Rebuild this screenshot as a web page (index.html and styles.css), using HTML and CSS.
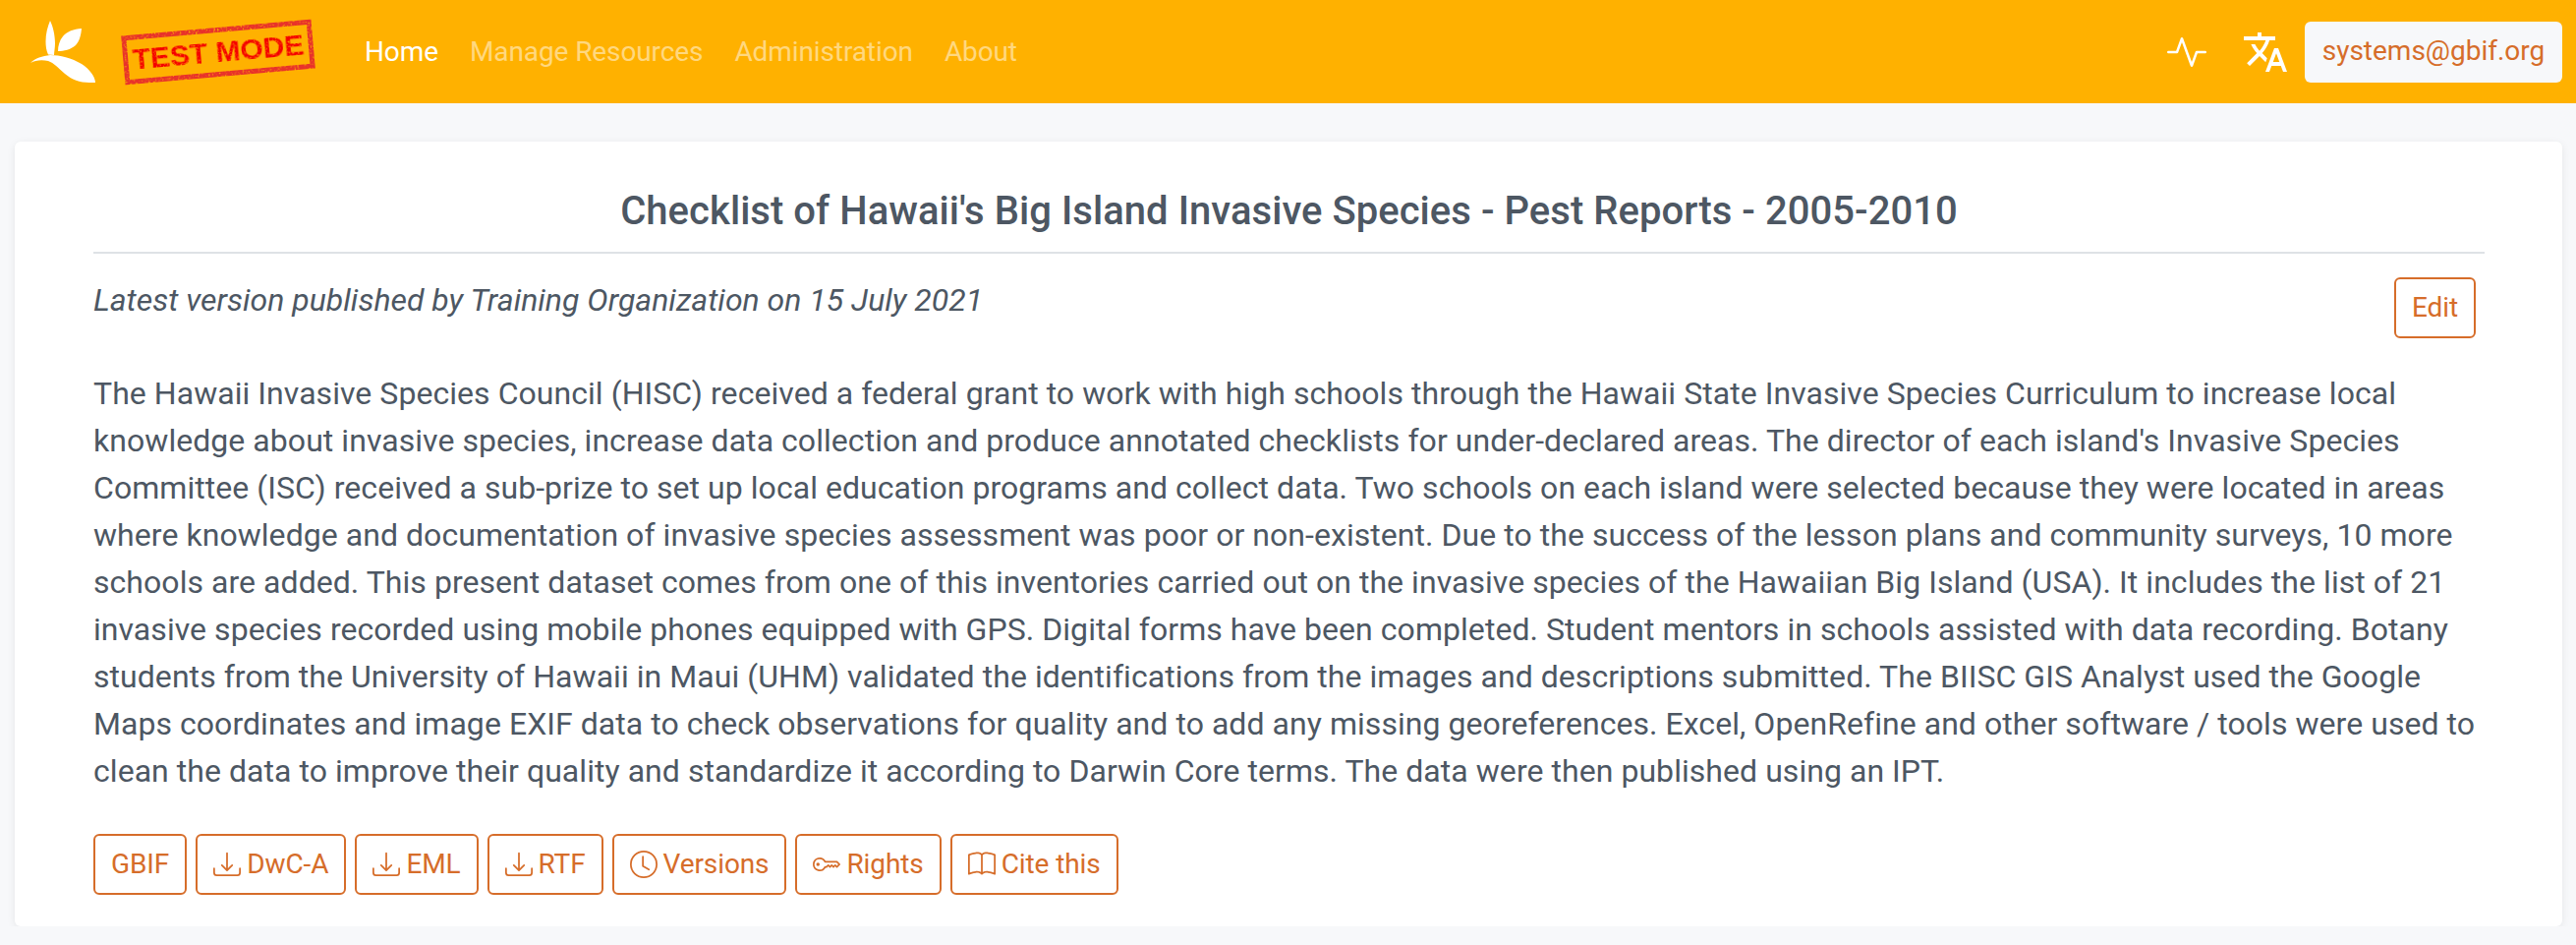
FILE: index.html
```html
<!DOCTYPE html>
<html lang="en">
<head>
  <meta charset="UTF-8">
  <title>Checklist of Hawaii's Big Island Invasive Species</title>
  <link rel="stylesheet" href="styles.css">
</head>
<body>
  <svg class="defs" width="0" height="0">
    <filter id="worn" x="-5%" y="-10%" width="110%" height="120%">
      <feTurbulence type="fractalNoise" baseFrequency="0.55" numOctaves="2" seed="4" result="noise"/>
      <feColorMatrix in="noise" type="matrix" values="0 0 0 0 0  0 0 0 0 0  0 0 0 0 0  0 0 0 -4 3.2" result="holes"/>
      <feComposite in="SourceGraphic" in2="holes" operator="in"/>
    </filter>
  </svg>

  <nav class="navbar">
    <svg class="logo" viewBox="0 0 66 64" fill="#fff">
      <path d="M20 0C23 6 25 15 25 23C25 28 24 32 24 35L18 34.5C16 30 15.5 26 15.5 21C15.5 13 17.5 6 20 0z"/>
      <path d="M52 8C44 8.5 37 11 33 16C29.5 20 28 26 28 31C34 31 41 29.5 46 25C50 21 51.5 14 52 8z"/>
      <path d="M0 43C5 38 12 36 20 35C30 35 42 38 52 44C60 49 66 57 66 63L60 63C50 63 42 60 35 54C28 48 24 43 18 41C12 39.5 5 40 0 43z"/>
    </svg>
    <div class="stamp"><span>TEST MODE</span></div>
    <ul class="menu">
      <li class="active">Home</li>
      <li>Manage Resources</li>
      <li>Administration</li>
      <li>About</li>
    </ul>
    <div class="nav-right">
      <svg class="nav-icon pulse" viewBox="0 0 16 16" fill="#fff"><path fill-rule="evenodd" d="M6 2a.5.5 0 0 1 .47.33L10 12.036l1.53-4.208A.5.5 0 0 1 12 7.5h3.5a.5.5 0 0 1 0 1h-3.15l-1.88 5.17a.5.5 0 0 1-.94 0L6 3.964 4.47 8.171A.5.5 0 0 1 4 8.5H.5a.5.5 0 0 1 0-1h3.15l1.88-5.17A.5.5 0 0 1 6 2Z"/></svg>
      <svg class="nav-icon lang" viewBox="0 0 24 24" fill="#fff"><path d="M12.87 15.07l-2.54-2.51.03-.03c1.74-1.94 2.98-4.17 3.71-6.53H17V4h-7V2H8v2H1v1.99h11.17C11.5 7.92 10.44 9.75 9 11.35 8.07 10.32 7.3 9.19 6.69 8h-2c.73 1.63 1.73 3.17 2.98 4.56l-5.09 5.02L4 19l5-5 3.11 3.11.76-2.04zM18.5 10h-2L12 22h2l1.12-3h4.75L21 22h2l-4.5-12zm-2.62 7l1.62-4.33L19.12 17h-3.24z"/></svg>
      <div class="user">systems@gbif.org</div>
    </div>
  </nav>

  <main class="card">
    <h1>Checklist of Hawaii's Big Island Invasive Species - Pest Reports - 2005-2010</h1>
    <div class="meta">
      <em>Latest version published by Training Organization on 15 July 2021</em>
      <a class="btn">Edit</a>
    </div>
    <p class="desc">The Hawaii Invasive Species Council (HISC) received a federal grant to work with high schools through the Hawaii State Invasive Species Curriculum to increase local knowledge about invasive species, increase data collection and produce annotated checklists for under-declared areas. The director of each island's Invasive Species Committee (ISC) received a sub-prize to set up local education programs and collect data. Two schools on each island were selected because they were located in areas where knowledge and documentation of invasive species assessment was poor or non-existent. Due to the success of the lesson plans and community surveys, 10 more schools are added. This present dataset comes from one of this inventories carried out on the invasive species of the Hawaiian Big Island (USA). It includes the list of 21 invasive species recorded using mobile phones equipped with GPS. Digital forms have been completed. Student mentors in schools assisted with data recording. Botany students from the University of Hawaii in Maui (UHM) validated the identifications from the images and descriptions submitted. The BIISC GIS Analyst used the Google Maps coordinates and image EXIF data to check observations for quality and to add any missing georeferences. Excel, OpenRefine and other software / tools were used to clean the data to improve their quality and standardize it according to Darwin Core terms. The data were then published using an IPT.</p>
    <div class="actions">
      <a class="btn">GBIF</a>
      <a class="btn"><svg viewBox="0 0 16 16" fill="currentColor"><path d="M.5 9.9a.5.5 0 0 1 .5.5v2.5a1 1 0 0 0 1 1h12a1 1 0 0 0 1-1v-2.5a.5.5 0 0 1 1 0v2.5a2 2 0 0 1-2 2H2a2 2 0 0 1-2-2v-2.5a.5.5 0 0 1 .5-.5z"/><path d="M7.646 11.854a.5.5 0 0 0 .708 0l3-3a.5.5 0 0 0-.708-.708L8.5 10.293V1.5a.5.5 0 0 0-1 0v8.793L5.354 8.146a.5.5 0 1 0-.708.708l3 3z"/></svg> DwC-A</a>
      <a class="btn"><svg viewBox="0 0 16 16" fill="currentColor"><path d="M.5 9.9a.5.5 0 0 1 .5.5v2.5a1 1 0 0 0 1 1h12a1 1 0 0 0 1-1v-2.5a.5.5 0 0 1 1 0v2.5a2 2 0 0 1-2 2H2a2 2 0 0 1-2-2v-2.5a.5.5 0 0 1 .5-.5z"/><path d="M7.646 11.854a.5.5 0 0 0 .708 0l3-3a.5.5 0 0 0-.708-.708L8.5 10.293V1.5a.5.5 0 0 0-1 0v8.793L5.354 8.146a.5.5 0 1 0-.708.708l3 3z"/></svg> EML</a>
      <a class="btn"><svg viewBox="0 0 16 16" fill="currentColor"><path d="M.5 9.9a.5.5 0 0 1 .5.5v2.5a1 1 0 0 0 1 1h12a1 1 0 0 0 1-1v-2.5a.5.5 0 0 1 1 0v2.5a2 2 0 0 1-2 2H2a2 2 0 0 1-2-2v-2.5a.5.5 0 0 1 .5-.5z"/><path d="M7.646 11.854a.5.5 0 0 0 .708 0l3-3a.5.5 0 0 0-.708-.708L8.5 10.293V1.5a.5.5 0 0 0-1 0v8.793L5.354 8.146a.5.5 0 1 0-.708.708l3 3z"/></svg> RTF</a>
      <a class="btn"><svg viewBox="0 0 16 16" fill="currentColor"><path d="M8 3.5a.5.5 0 0 0-1 0V9a.5.5 0 0 0 .252.434l3.5 2a.5.5 0 0 0 .496-.868L8 8.71V3.5z"/><path d="M8 16A8 8 0 1 0 8 0a8 8 0 0 0 0 16zm7-8A7 7 0 1 1 1 8a7 7 0 0 1 14 0z"/></svg> Versions</a>
      <a class="btn"><svg viewBox="0 0 16 16" fill="currentColor"><path d="M0 8a4 4 0 0 1 7.465-2H14a.5.5 0 0 1 .354.146l1.5 1.5a.5.5 0 0 1 0 .708l-1.5 1.5a.5.5 0 0 1-.708 0L13 9.207l-.646.647a.5.5 0 0 1-.708 0L11 9.207l-.646.647a.5.5 0 0 1-.708 0L9 9.207l-.646.647A.5.5 0 0 1 8 10h-.535A4 4 0 0 1 0 8zm4-3a3 3 0 1 0 2.712 4.285A.5.5 0 0 1 7.163 9h.63l.853-.854a.5.5 0 0 1 .708 0l.646.647.646-.647a.5.5 0 0 1 .708 0l.646.647.646-.647a.5.5 0 0 1 .708 0l.646.647.793-.793-1-1h-6.63a.5.5 0 0 1-.451-.285A3 3 0 0 0 4 5z"/><path d="M4 8a1 1 0 1 1-2 0 1 1 0 0 1 2 0z"/></svg> Rights</a>
      <a class="btn"><svg viewBox="0 0 16 16" fill="currentColor"><path d="M1 2.828c.885-.37 2.154-.769 3.388-.893 1.33-.134 2.458.063 3.112.752v9.746c-.935-.53-2.12-.603-3.213-.493-1.18.12-2.37.461-3.287.811V2.828zm7.5-.141c.654-.689 1.782-.886 3.112-.752 1.234.124 2.503.523 3.388.893v9.923c-.918-.35-2.107-.692-3.287-.81-1.094-.111-2.278-.039-3.213.492V2.687zM8 1.783C7.015.936 5.587.81 4.287.94c-1.514.153-3.042.672-3.994 1.105A.5.5 0 0 0 0 2.5v11a.5.5 0 0 0 .707.455c.882-.4 2.303-.881 3.68-1.02 1.409-.142 2.59.087 3.223.877a.5.5 0 0 0 .78 0c.633-.79 1.814-1.019 3.222-.877 1.378.139 2.8.62 3.681 1.02A.5.5 0 0 0 16 13.5v-11a.5.5 0 0 0-.293-.455c-.952-.433-2.48-.952-3.994-1.105C10.413.809 8.985.936 8 1.783z"/></svg> Cite this</a>
    </div>
  </main>
</body>
</html>
```

FILE: styles.css
```css
* {
  box-sizing: border-box;
}
body {
  margin: 0;
  background: #f7f8fa;
  font-family: Roboto, sans-serif;
  font-size: 32px;
  line-height: 48px;
  color: #4d5763;
}
.defs {
  display: block;
  height: 0;
}
.navbar {
  display: flex;
  align-items: center;
  height: 105px;
  padding: 0 14px 0 31px;
  background: #ffb100;
}
.logo {
  width: 66px;
  height: 64px;
}
.stamp {
  width: 194px;
  height: 50px;
  margin: 0 52px 0 28px;
  border: 5px solid #e8302a;
  display: flex;
  align-items: center;
  justify-content: center;
  transform: rotate(-5deg);
  filter: url(#worn);
}
.stamp span {
  font-family: "Liberation Sans", sans-serif;
  font-weight: bold;
  font-size: 30px;
  line-height: 1;
  color: #f40000;
  white-space: nowrap;
}
.menu {
  display: flex;
  gap: 32px;
  margin: 0;
  padding: 0;
  list-style: none;
  font-size: 28px;
  letter-spacing: -0.1px;
  color: rgba(255, 255, 255, 0.5);
}
.menu .active {
  color: #fff;
}
.nav-right {
  display: flex;
  align-items: center;
  margin-left: auto;
}
.nav-icon {
  display: block;
}
.pulse {
  width: 40px;
  height: 40px;
  margin-right: 36px;
}
.lang {
  width: 48px;
  height: 48px;
  margin-right: 16px;
}
.user {
  width: 262px;
  height: 62px;
  text-align: center;
  line-height: 60px;
  font-size: 28px;
  background: #f7f8fa;
  color: #d66d2a;
  border-radius: 6px;
}
.card {
  margin: 39px 14px 0 15px;
  padding: 46px 79px 30px 80px;
  height: 798px;
  background: #fff;
  border-radius: 6px;
  box-shadow: 0 2px 8px rgba(0, 0, 0, 0.08);
}
h1 {
  margin: 0;
  padding-bottom: 16px;
  border-bottom: 2px solid #dee2e6;
  font-size: 40px;
  line-height: 50px;
  font-weight: 500;
  letter-spacing: 0.04px;
  text-align: center;
}
.meta {
  display: flex;
  justify-content: space-between;
  align-items: flex-start;
  padding: 24px 9px 0 0;
  height: 118px;
}
.meta em {
  line-height: 46px;
}
.desc {
  margin: 0;
  letter-spacing: 0.05px;
}
.actions {
  display: flex;
  gap: 9px;
  margin-top: 40px;
}
.btn {
  display: inline-flex;
  align-items: center;
  gap: 6px;
  height: 62px;
  padding: 0 16px;
  border: 2px solid #d66d2a;
  border-radius: 6px;
  color: #d66d2a;
  font-size: 28px;
  letter-spacing: -0.1px;
}
.btn svg {
  width: 28px;
  height: 28px;
}
```
